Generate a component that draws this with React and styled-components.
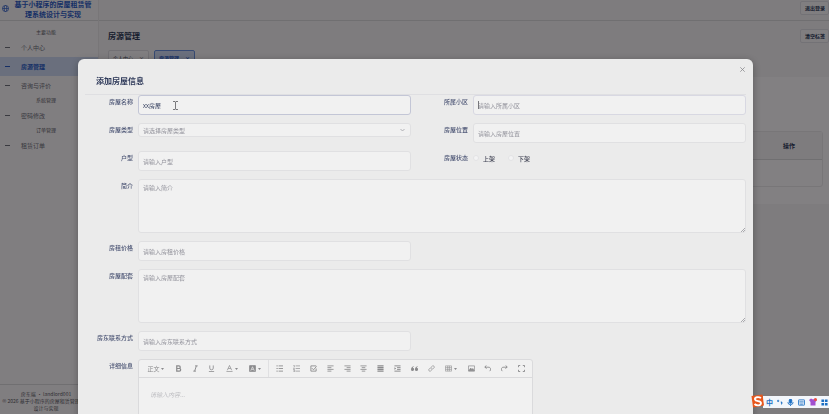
import React, { useState } from "react";
import styled, { createGlobalStyle, css } from "styled-components";

const GlobalStyle = createGlobalStyle`
  * {
    box-sizing: border-box;
  }
  body {
    margin: 0;
    overflow: hidden;
    background: #f7f3f7;
    font-family: "Noto Sans CJK SC", "Liberation Sans", sans-serif;
    font-size: 6px;
    color: #2f3a5a;
  }
  button, input, select, textarea {
    font: inherit;
    color: inherit;
  }
`;

const Layout = styled.div`
  display: grid;
  grid-template-columns: 99px 1fr;
  height: 100vh;
`;

const Sidebar = styled.aside`
  display: flex;
  flex-direction: column;
  border-right: 1px solid #ebe7ec;
  background: #fcf8fc;
`;

const Brand = styled.div`
  display: flex;
  align-items: center;
  gap: 5px;
  height: 21px;
  padding: 0 6px 3px 2px;
  border-bottom: 1px solid #dcd9de;
  color: #2c5cc8;
`;

const BrandName = styled.h1`
  flex: 1;
  margin: 0;
  font-size: 7px;
  line-height: 10px;
  font-weight: 700;
  text-align: center;
`;

const Nav = styled.nav`
  flex: 1;
  padding-top: 6px;
`;

const NavGroup = styled.div`
  height: 11px;
  padding-right: 6px;
  font-size: 5px;
  line-height: 9px;
  text-align: center;
  color: #5c5a66;
`;

const NavItem = styled.a`
  display: flex;
  align-items: center;
  gap: 11px;
  height: 19px;
  padding-left: 5px;
  color: #72727e;
  text-decoration: none;

  &::before {
    content: "";
    width: 5px;
    height: 1px;
    background: currentColor;
  }

  ${({ $active }) =>
    $active &&
    css`
      background: #d0daf5;
      color: #2c5cc8;
      font-weight: 700;
    `}
`;

const SideFooter = styled.footer`
  padding: 5px 6px 3px 0;
  border-top: 1px solid #dcd9de;
  font-size: 5px;
  line-height: 7px;
  text-align: center;
  color: #5c5a66;
`;

const FooterName = styled.span`
  white-space: nowrap;
`;

const Main = styled.main`
  display: flex;
  flex-direction: column;
`;

const TopBar = styled.header`
  display: flex;
  justify-content: flex-end;
  height: 21px;
  padding-top: 1px;
  border-bottom: 1px solid #dcd9de;
`;

const PlainButton = styled.button`
  height: 14px;
  padding: 0 3px 0 4px;
  border: 1px solid #e2dfe8;
  border-radius: 2px;
  background: #fcf8fc;
  font-size: 5px;
  line-height: 12px;
  font-weight: 700;
`;

const PageHead = styled.div`
  display: flex;
  align-items: center;
  justify-content: space-between;
  height: 29px;
  padding: 1px 0 0 9px;
`;

const PageTitle = styled.h2`
  margin: 0;
  font-size: 8px;
  line-height: 12px;
`;

const Tabs = styled.div`
  display: flex;
  gap: 5px;
  height: 27px;
  padding-left: 9px;
`;

const Tab = styled.button`
  display: flex;
  align-items: center;
  gap: 6px;
  height: 14px;
  padding: 0 4px;
  border: 1px solid ${({ $active }) => ($active ? "#6a90e0" : "#dfdce4")};
  border-radius: 2px;
  background: ${({ $active }) => ($active ? "#d0daf5" : "#fcf8fc")};
  color: ${({ $active }) => ($active ? "#2c5cc8" : "#4c5062")};
  font-size: 5px;
  font-weight: ${({ $active }) => ($active ? 700 : 400)};
`;

const Panel = styled.section`
  padding: 54px 6px 17px;
  background: #fffbff;
`;

const Table = styled.table`
  width: 100%;
  border: 1px solid #ebe7ec;
  border-radius: 3px;
  border-spacing: 0;

  th {
    height: 28px;
    padding: 0;
    border-bottom: 1px solid #dcd9de;
    background: #f8f4f8;
    line-height: 10px;
  }
  th:last-child {
    width: 66px;
  }
  td {
    height: 26px;
    padding: 0;
  }
`;

const Overlay = styled.div`
  position: fixed;
  inset: 0;
  padding: 59px 76px 0 78px;
  overflow: hidden;
  background: rgba(0, 0, 0, 0.49);
`;

const Dialog = styled.div`
  min-height: 100%;
  padding: 0 7px;
  border-radius: 6px;
  background: #ebebeb;
  box-shadow: 0 2px 8px rgba(0, 0, 0, 0.3);
`;

const DialogHead = styled.div`
  display: flex;
  justify-content: space-between;
  height: 36px;
  padding-left: 11px;
  border-bottom: 1px solid #dfdfe2;
`;

const DialogTitle = styled.h3`
  margin: 0;
  padding-top: 16px;
  font-size: 8px;
  line-height: 12px;
`;

const CloseButton = styled.button`
  display: flex;
  align-items: center;
  justify-content: center;
  width: 8px;
  height: 20px;
  padding: 0;
  border: 0;
  background: none;
  color: #85858a;
`;

const Form = styled.form`
  display: grid;
  grid-template-columns: 1fr 1fr;
  gap: 8px 9px;
`;

const Field = styled.div`
  display: grid;
  grid-template-columns: 53px 1fr;
  align-items: start;
  grid-column: ${({ $wide, $alone }) => ($wide ? "1 / -1" : $alone ? "1" : "auto")};
`;

const labelText = css`
  padding-right: 5px;
  line-height: 14px;
  font-weight: 500;
  text-align: right;
  color: #4b5474;
  white-space: nowrap;
`;

const Label = styled.label`
  ${labelText}
`;

const GroupLabel = styled.span`
  ${labelText}
`;

const Control = styled.div`
  position: relative;
  display: flex;
`;

const box = css`
  display: block;
  width: 100%;
  border: 1px solid #e0e0e2;
  border-radius: 3px;
  outline: none;
  background: #f1f1f1;

  &::placeholder {
    color: #93939c;
    opacity: 1;
  }
`;

const Input = styled.input`
  ${box}
  height: 20px;
  padding: 0 4px;
  border-color: ${({ $tone }) =>
    $tone === "focus" ? "#c3c6d6" : $tone === "next" ? "#d8d8e2" : "#e0e0e2"};
`;

const Select = styled.select`
  ${box}
  height: 14px;
  padding: 0 4px;
  appearance: none;
  color: #93939c;
`;

const TextArea = styled.textarea`
  ${box}
  height: 54px;
  padding: 3px 4px;
  line-height: 10px;
  resize: none;
`;

const Chevron = styled.svg`
  position: absolute;
  right: 6px;
  top: 5px;
  pointer-events: none;
`;

const Grip = styled.svg`
  position: absolute;
  right: 1px;
  bottom: 1px;
`;

const Caret = styled.span`
  position: absolute;
  left: 5px;
  top: 6px;
  width: 1px;
  height: 8px;
  background: #77777c;
`;

const Pointer = styled.svg`
  position: absolute;
  left: 35px;
  top: 6px;
`;

const RadioGroup = styled.div`
  display: flex;
  gap: 13px;
  height: 14px;
`;

const RadioLabel = styled.label`
  display: flex;
  align-items: center;
  gap: 4px;
  font-weight: 500;
  color: #3c3f50;
`;

const Radio = styled.input`
  appearance: none;
  width: 6px;
  height: 6px;
  margin: 0;
  border: 1px solid #e3e3e5;
  border-radius: 50%;
  background: #f3f3f4;
`;

const Editor = styled.div`
  width: 65%;
  border: 1px solid #dadadc;
  border-radius: 3px;
  background: #f1f1f1;
`;

const Toolbar = styled.div`
  display: flex;
  height: 18px;
  padding: 0 2px 0 3px;
  border-bottom: 1px solid #dadadc;
`;

const Tool = styled.button`
  display: flex;
  flex: ${({ $size }) => $size || 17} 1 0;
  align-items: center;
  justify-content: center;
  gap: 2px;
  padding: 0;
  border: 0;
  background: none;
  color: #8a8a8c;
`;

const Divider = styled.span`
  width: 1px;
  margin: 0 2px;
  background: #e0e0e2;
`;

const EditorText = styled.textarea`
  display: block;
  width: 100%;
  height: 80px;
  padding: 12px 11px;
  border: 0;
  outline: none;
  background: none;
  line-height: 10px;
  resize: none;

  &::placeholder {
    color: #bdbdc1;
    font-style: italic;
    opacity: 1;
  }
`;

const ImeBar = styled.div`
  position: fixed;
  right: 0;
  bottom: 6px;
  display: flex;
  align-items: center;
  height: 12px;
  background: #f3f6fb;
  color: #1c6fc4;
`;

const ImeLogo = styled.svg`
  margin: -2px 0 0 -12px;
`;

const ImeItems = styled.div`
  display: flex;
  align-items: center;
  gap: 4px;
  padding: 0 1px 0 2px;
  font-size: 7px;
  line-height: 12px;
  font-weight: 700;
`;

const Icon = ({ size = 7, children }) => (
  <svg width={size} height={size} viewBox="0 0 16 16" fill="none" stroke="currentColor" strokeWidth="1.6">
    {children}
  </svg>
);

const Arrow = () => (
  <svg width="3" height="2" viewBox="0 0 6 4">
    <path d="M0 0h6L3 4z" fill="currentColor" />
  </svg>
);

const tools = [
  { name: "加粗", icon: <path d="M4 2h5a3 3 0 0 1 0 6H4zM4 8h6a3 3 0 0 1 0 6H4z" strokeWidth="2.8" /> },
  { name: "斜体", icon: <path d="M7 2h6M3 14h6M10 2 6 14" strokeWidth="2.2" /> },
  { name: "下划线", icon: <path d="M4 1v6a4 4 0 0 0 8 0V1M2 15h12" strokeWidth="1.9" /> },
  { name: "文字颜色", arrow: true, icon: <path d="M3 12 8 1l5 11M5 8h6M1 15h14" /> },
  {
    name: "背景色",
    arrow: true,
    icon: (
      <>
        <rect x="1" y="1" width="14" height="14" rx="1" fill="currentColor" />
        <path d="m4 13 4-9 4 9M6 10h4" stroke="#f1f1f1" />
      </>
    ),
  },
  { divider: true },
  { name: "无序列表", icon: <path d="M1 2h3M1 8h3M1 14h3M6 2h10M6 8h10M6 14h10" strokeWidth="2" /> },
  { name: "有序列表", icon: <path d="M6 2h10M6 8h10M6 14h10M1 1h2v4M1 7h2L1 10h3M1 12h3v3H1" strokeWidth="1.5" /> },
  { name: "待办", icon: <path d="M14 8v6H2V2h12M4 7l4 4 7-8" strokeWidth="2" /> },
  { name: "左对齐", icon: <path d="M1 2h14M1 6h9M1 10h14M1 14h9" strokeWidth="1.9" /> },
  { name: "右对齐", icon: <path d="M1 2h14M6 6h9M1 10h14M6 14h9" strokeWidth="1.9" /> },
  { name: "居中", icon: <path d="M1 2h14M4 6h8M1 10h14M4 14h8" strokeWidth="1.9" /> },
  { name: "两端对齐", icon: <path d="M1 2h14M1 6h14M1 10h14M1 14h14" strokeWidth="2.6" /> },
  {
    name: "缩进",
    icon: (
      <>
        <path d="M1 2h14M7 6h8M7 10h8M1 14h14" strokeWidth="2.2" />
        <path d="m1 5 4 3-4 3z" fill="currentColor" stroke="none" />
      </>
    ),
  },
  {
    name: "引用",
    icon: (
      <path
        d="M7 2C3 3 0 6 0 10a3.600 3.600 0 1 0 4-3.600C4 5 5 4 7 3zM16 2c-4 1-7 4-7 8a3.600 3.600 0 1 0 4-3.600C13 5 14 4 16 3z"
        fill="currentColor"
        stroke="none"
      />
    ),
  },
  {
    name: "链接",
    icon: <path d="M7 9a3 3 0 0 0 4 0l3-3a3 3 0 0 0-4-4L8 4M9 7a3 3 0 0 0-4 0l-3 3a3 3 0 0 0 4 4l2-2" />,
  },
  { name: "表格", arrow: true, icon: <path d="M1 2h14v12H1zM1 6h14M1 10h14M6 2v12M10 2v12" strokeWidth="1.3" /> },
  {
    name: "图片",
    icon: (
      <>
        <path d="M1 2h14v12H1z" />
        <path d="m2 13 4-6 3 3 2-2 3 5z" fill="currentColor" />
      </>
    ),
  },
  { name: "撤销", icon: <path d="M5 1 2 5l4 3M2 5h7a5 5 0 0 1 4 9" strokeWidth="2" /> },
  { name: "重做", icon: <path d="m11 1 3 4-4 3M14 5H7a5 5 0 0 0-4 9" strokeWidth="2" /> },
  { name: "全屏", icon: <path d="M1 5V1h4M11 1h4v4M15 11v4h-4M5 15H1v-4" strokeWidth="2.2" /> },
];

const TextField = ({ id, label, tone, alone, children, ...rest }) => (
  <Field $alone={alone}>
    <Label htmlFor={id}>{label}</Label>
    <Control>
      <Input id={id} placeholder={`请输入${label}`} $tone={tone} {...rest} />
      {children}
    </Control>
  </Field>
);

const AreaField = ({ id, label }) => (
  <Field $wide>
    <Label htmlFor={id}>{label}</Label>
    <Control>
      <TextArea id={id} placeholder={`请输入${label}`} />
      <Grip width="4" height="4" viewBox="0 0 4 4" stroke="#8b8b90" strokeWidth="0.7">
        <path d="M0 4 4 0M2 4l2-2" />
      </Grip>
    </Control>
  </Field>
);

const App = () => {
  const [name, setName] = useState("xx房屋");

  return (
    <>
      <GlobalStyle />
      <Layout>
        <Sidebar>
          <Brand>
            <Icon>
              <circle cx="8" cy="8" r="7" />
              <ellipse cx="8" cy="8" rx="3" ry="7" />
              <path d="M1 8h14" />
            </Icon>
            <BrandName>基于小程序的房屋租赁管理系统设计与实现</BrandName>
          </Brand>
          <Nav>
            <NavGroup>主要功能</NavGroup>
            <NavItem href="#profile">个人中心</NavItem>
            <NavItem href="#houses" $active>房源管理</NavItem>
            <NavItem href="#reviews">咨询与评价</NavItem>
            <NavGroup>系统管理</NavGroup>
            <NavItem href="#password">密码修改</NavItem>
            <NavGroup>订单管理</NavGroup>
            <NavItem href="#orders">租赁订单</NavItem>
          </Nav>
          <SideFooter>
            <div>房东端 · landlord001</div>
            <div>
              © 2026 基于小程序的房屋租赁管理系统
              <FooterName>设计与实现</FooterName>
            </div>
          </SideFooter>
        </Sidebar>
        <Main>
          <TopBar>
            <PlainButton>退出登录</PlainButton>
          </TopBar>
          <PageHead>
            <PageTitle>房源管理</PageTitle>
            <PlainButton>清空标签</PlainButton>
          </PageHead>
          <Tabs>
            <Tab>个人中心 <span>×</span></Tab>
            <Tab $active>房源管理 <span>×</span></Tab>
          </Tabs>
          <Panel>
            <Table>
              <thead>
                <tr><th /><th>操作</th></tr>
              </thead>
              <tbody>
                <tr><td /><td /></tr>
              </tbody>
            </Table>
          </Panel>
        </Main>
      </Layout>

      <Overlay>
        <Dialog role="dialog" aria-labelledby="dialog-title">
          <DialogHead>
            <DialogTitle id="dialog-title">添加房屋信息</DialogTitle>
            <CloseButton aria-label="关闭">
              <Icon size={5}>
                <path d="m1 1 14 14M15 1 1 15" strokeWidth="2.4" />
              </Icon>
            </CloseButton>
          </DialogHead>
          <Form>
            <TextField id="name" label="房屋名称" tone="focus" value={name} onChange={(e) => setName(e.target.value)}>
              <Pointer width="5" height="9" viewBox="0 0 5 9" fill="none" stroke="#5c5c60" strokeWidth="0.8">
                <path d="M0 .5h2l.5.5.5-.5h2M2.500 1v7M0 8.500h2l.5-.5.5.5h2" />
              </Pointer>
            </TextField>
            <TextField id="community" label="所属小区" tone="next">
              <Caret />
            </TextField>
            <Field>
              <Label htmlFor="type">房屋类型</Label>
              <Control>
                <Select id="type">
                  <option>请选择房屋类型</option>
                </Select>
                <Chevron width="5" height="4" viewBox="0 0 10 8" fill="none" stroke="#a2a2a8" strokeWidth="1.6">
                  <path d="m1 2 4 4 4-4" />
                </Chevron>
              </Control>
            </Field>
            <TextField id="location" label="房屋位置" />
            <TextField id="layout" label="户型" />
            <Field role="radiogroup" aria-labelledby="status-label">
              <GroupLabel id="status-label">房屋状态</GroupLabel>
              <RadioGroup>
                <RadioLabel><Radio type="radio" name="status" />上架</RadioLabel>
                <RadioLabel><Radio type="radio" name="status" />下架</RadioLabel>
              </RadioGroup>
            </Field>
            <AreaField id="intro" label="简介" />
            <TextField id="price" label="房租价格" alone />
            <AreaField id="facilities" label="房屋配套" />
            <TextField id="contact" label="房东联系方式" alone />
            <Field $wide>
              <Label htmlFor="detail">详细信息</Label>
              <Editor>
                <Toolbar>
                  <Tool type="button" $size={28}>正文<Arrow /></Tool>
                  {tools.map((tool, i) =>
                    tool.divider ? (
                      <Divider key={i} />
                    ) : (
                      <Tool key={i} type="button" aria-label={tool.name} $size={tool.arrow ? 23 : 17}>
                        <Icon>{tool.icon}</Icon>
                        {tool.arrow && <Arrow />}
                      </Tool>
                    )
                  )}
                </Toolbar>
                <EditorText id="detail" placeholder="请输入内容..." />
              </Editor>
            </Field>
          </Form>
        </Dialog>
      </Overlay>

      <ImeBar>
        <ImeLogo width="13" height="14" viewBox="0 0 26 28">
          <path d="M1 4 23 1l3 22-22 4z" fill="#e8561c" />
          <path d="M20 8C15 5 7 6 8 11s12 1 12 7-9 6-13 2" fill="none" stroke="#fff" strokeWidth="3.6" />
        </ImeLogo>
        <ImeItems>
          <span>中</span>
          <Icon size={6}>
            <circle cx="3" cy="5" r="2" fill="currentColor" />
            <path d="M10 8c4 0 4 4 1 6" strokeWidth="3" />
          </Icon>
          <Icon>
            <rect x="5" y="0" width="6" height="10" rx="3" fill="currentColor" />
            <path d="M2 7a6 6 0 0 0 12 0M8 13v3" strokeWidth="2" />
          </Icon>
          <Icon>
            <rect x="1" y="2" width="14" height="12" rx="1" strokeWidth="2" />
            <path d="M3 6h10M3 9h10M5 12h6" strokeWidth="1.4" />
          </Icon>
          <Icon size={8}>
            <path d="m0 4 4-3 4 2 4-2 4 3-3 4v7H3V8z" fill="#a14fd0" stroke="none" />
            <circle cx="13" cy="3" r="3" fill="#f0503c" stroke="none" />
          </Icon>
          <Icon>
            <path d="M1 1h6v6H1zM9 1h6v6H9zM1 9h6v6H1zM9 9h6v6H9z" fill="currentColor" stroke="none" />
          </Icon>
        </ImeItems>
      </ImeBar>
    </>
  );
};

export default App;
